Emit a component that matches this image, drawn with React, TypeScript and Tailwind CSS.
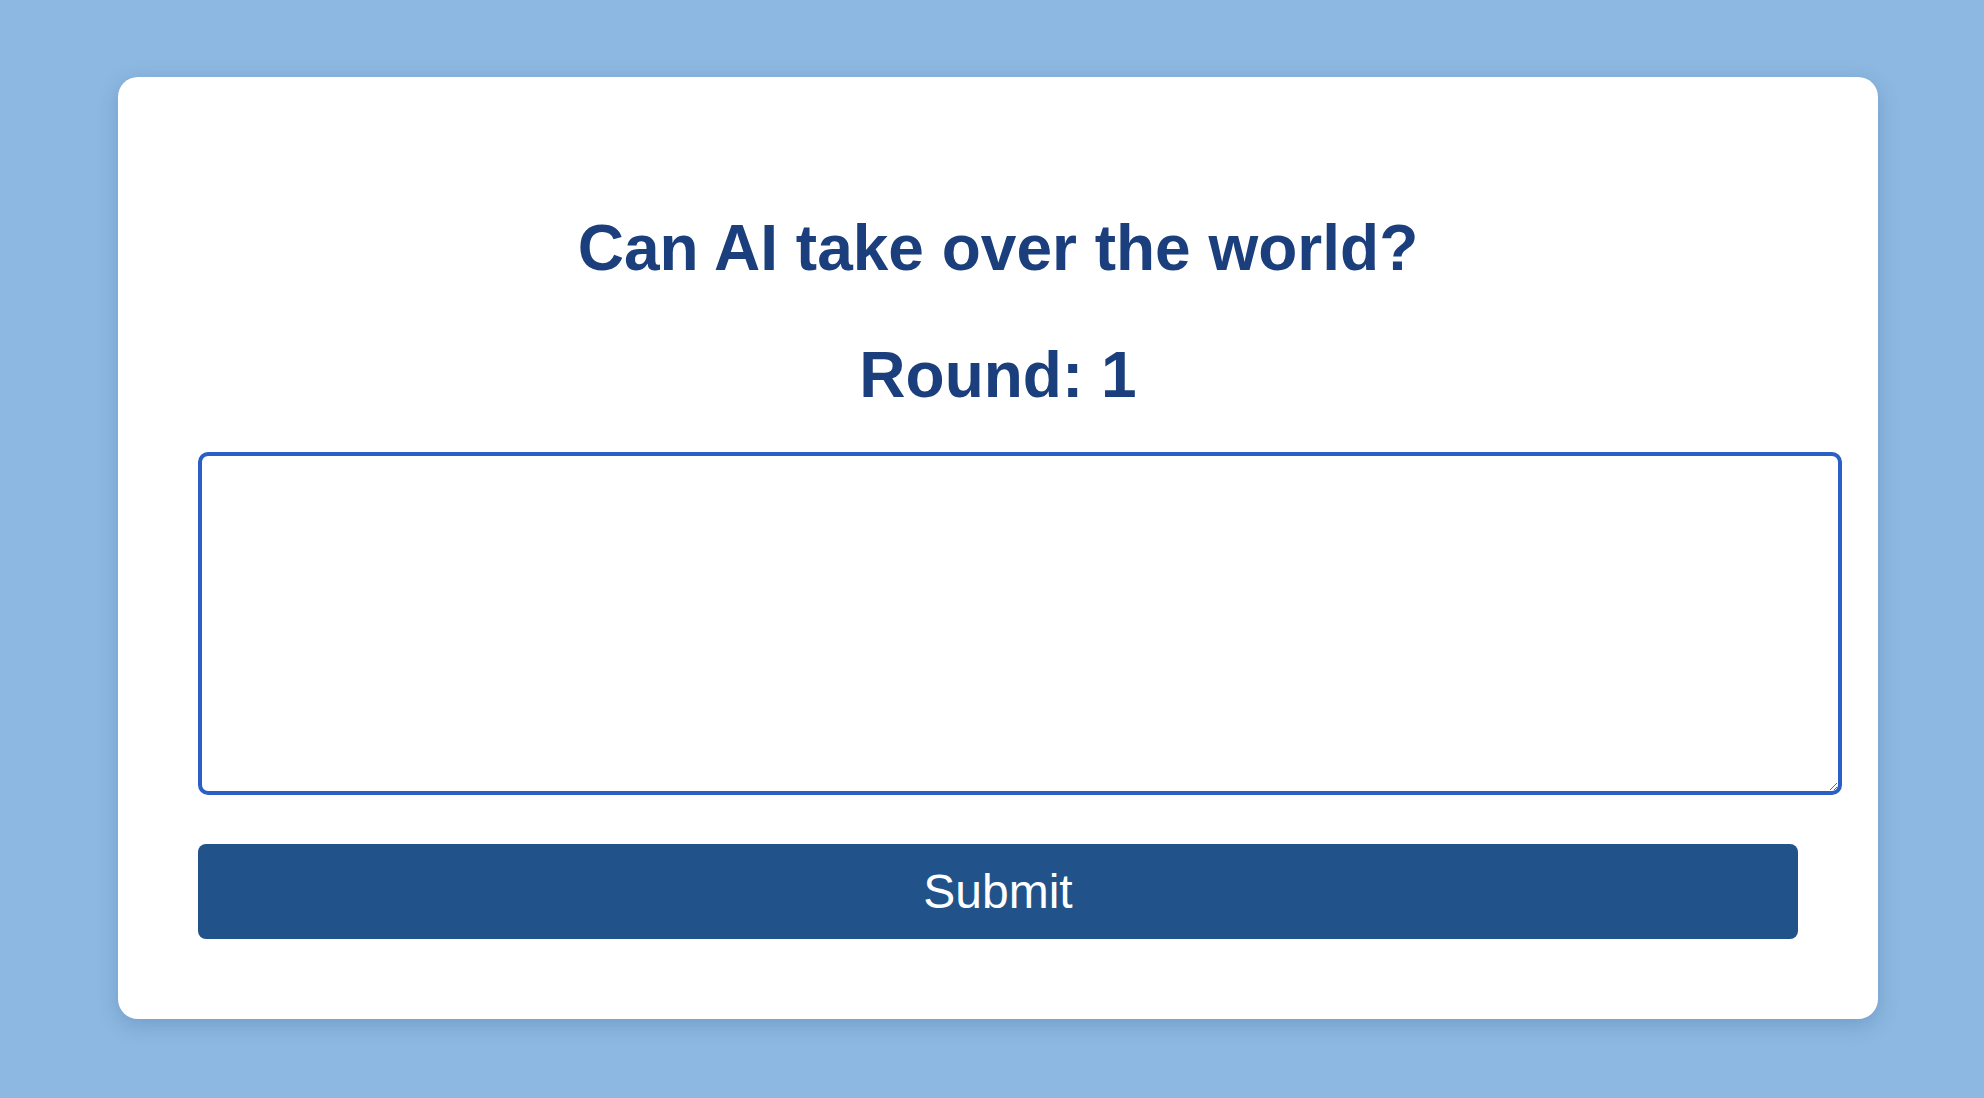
import React, { useState } from 'react';

export default function App() {
  const [answer, setAnswer] = useState('');
  const round = 1;

  return (
    <div className="min-h-screen bg-[#8cb8e1] pt-[77px] font-['Liberation_Sans',Arial,sans-serif]">
      <div className="ml-[118px] w-[1760px] h-[942px] rounded-[20px] bg-white p-[80px] shadow-[0_6px_20px_rgba(40,80,130,0.25)]">
        <h1 className="mt-[54px] text-center text-[64px] leading-[74px] font-bold text-[#1b3f7c]">
          Can AI take over the world?
        </h1>
        <h2 className="mt-[53px] text-center text-[64px] leading-[74px] font-bold text-[#1b3f7c]">
          Round: {round}
        </h2>
        <textarea
          autoFocus
          value={answer}
          onChange={(e) => setAnswer(e.target.value)}
          className="mt-[40px] block w-[1644px] h-[343px] rounded-[10px] border-4 border-[#2a5fc5] px-[18px] py-[14px] text-[26px] text-black caret-black outline-none"
        />
        <button className="mt-[49px] flex h-[95px] w-full items-center justify-center rounded-[8px] bg-[#22528a] text-[48px] text-white">
          Submit
        </button>
      </div>
    </div>
  );
}
